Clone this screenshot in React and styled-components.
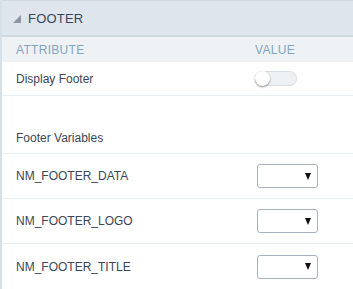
import styled, { createGlobalStyle } from "styled-components";

const GlobalStyle = createGlobalStyle`
  html, body {
    margin: 0;
    padding: 0;
    background: #ffffff;
    font-family: "Liberation Sans", Arial, sans-serif;
  }
`;

const Panel = styled.div`
  width: 353px;
  height: 289px;
  box-sizing: border-box;
  border-left: 2px solid #d6e0e8;
  overflow: hidden;
`;

const Header = styled.div`
  height: 37px;
  box-sizing: border-box;
  display: flex;
  align-items: center;
  padding-left: 11px;
  background-color: #dfe5ec;
  border-top: 1px solid #cfd9df;
  border-bottom: 2px solid #cfd9df;
`;

const Caret = styled.span`
  width: 0;
  height: 0;
  border-left: 8px solid transparent;
  border-bottom: 8px solid #8c97a1;
  margin-right: 7px;
  margin-top: 1px;
`;

const HeaderTitle = styled.h2`
  margin: 0;
  font-size: 13px;
  font-weight: normal;
  color: #37475a;
  letter-spacing: 0.2px;
`;

const ColumnRow = styled.div`
  height: 25px;
  display: grid;
  grid-template-columns: 239px 1fr;
  align-items: center;
  padding-left: 14px;
  background-color: #eef2f5;
`;

const ColumnLabel = styled.span`
  font-size: 12px;
  color: #84a4bd;
  letter-spacing: 0.3px;
`;

const Row = styled.div`
  height: ${({ $h }) => $h}px;
  box-sizing: border-box;
  display: grid;
  grid-template-columns: 239px 1fr;
  align-items: ${({ $bottom }) => ($bottom ? "end" : "center")};
  padding: ${({ $bottom }) => ($bottom ? "0 0 8px 14px" : "0 0 0 14px")};
  border-bottom: ${({ $last }) => ($last ? "none" : "1px solid #e9eef2")};
`;

const Label = styled.span`
  font-size: 12px;
  color: #3b4656;
`;

const Toggle = styled.div`
  position: relative;
  width: 42px;
  height: 15px;
  box-sizing: border-box;
  border-radius: 8px;
  background-color: #eef1f4;
  border: 1px solid #d6dce1;
`;

const Knob = styled.span`
  position: absolute;
  left: -1px;
  top: -1px;
  width: 15px;
  height: 15px;
  border-radius: 50%;
  background: #ffffff;
  box-shadow: 0 1px 2px rgba(0, 0, 0, 0.45);
`;

const Select = styled.div`
  width: 61px;
  height: 24px;
  margin-left: 2px;
  box-sizing: border-box;
  border: 1px solid #a9b2bc;
  border-radius: 3px;
  background: #ffffff;
  display: flex;
  align-items: center;
  justify-content: flex-end;
  padding-right: 6px;
`;

const Arrow = styled.span`
  width: 0;
  height: 0;
  border-left: 3.5px solid transparent;
  border-right: 3.5px solid transparent;
  border-top: 7px solid #111111;
`;

const variables = ["NM_FOOTER_DATA", "NM_FOOTER_LOGO", "NM_FOOTER_TITLE"];

export default function App() {
  return (
    <>
      <GlobalStyle />
      <Panel>
        <Header>
          <Caret />
          <HeaderTitle>FOOTER</HeaderTitle>
        </Header>

        <ColumnRow>
          <ColumnLabel>ATTRIBUTE</ColumnLabel>
          <ColumnLabel>VALUE</ColumnLabel>
        </ColumnRow>

        <Row $h={34}>
          <Label>Display Footer</Label>
          <Toggle>
            <Knob />
          </Toggle>
        </Row>

        <Row $h={58} $bottom>
          <Label>Footer Variables</Label>
        </Row>

        {variables.map((name, i) => (
          <Row key={name} $h={45} $last={i === variables.length - 1}>
            <Label>{name}</Label>
            <Select>
              <Arrow />
            </Select>
          </Row>
        ))}
      </Panel>
    </>
  );
}
